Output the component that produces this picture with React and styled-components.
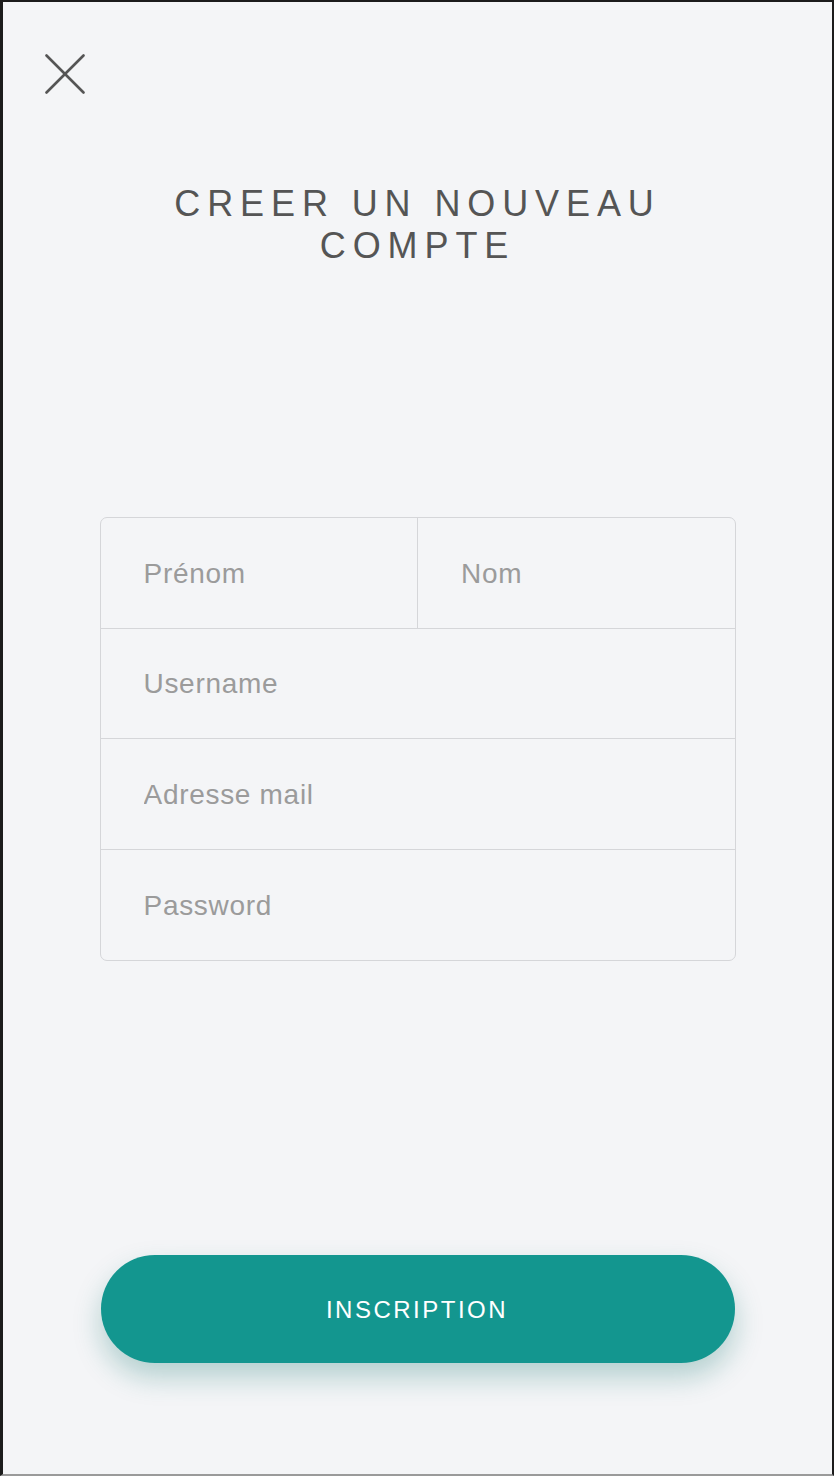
import React from 'react'
import styled, { createGlobalStyle } from 'styled-components'

const GlobalStyle = createGlobalStyle`
    html, body {
        margin: 0;
        padding: 0;
        background: #f4f5f7;
    }
    * {
        box-sizing: border-box;
    }
`

const Screen = styled.div`
    width: 834px;
    height: 1476px;
    background-color: #f4f5f7;
    border-top: 2px solid #1c1c1c;
    border-left: 3px solid #1c1c1c;
    border-right: 2px solid #1c1c1c;
    border-bottom: 2px solid #9a9a9a;
    font-family: "Liberation Sans", Arial, sans-serif;
    display: flex;
    flex-direction: column;
    align-items: center;
`

const TopBar = styled.div`
    width: 100%;
    padding: 52px 0 0 42px;
    display: flex;
`

const CloseButton = styled.button`
    width: 40px;
    height: 40px;
    padding: 0;
    border: none;
    background: transparent;
    cursor: pointer;
    display: flex;
`

const Title = styled.h1`
    margin: 89px 0 0 0;
    max-width: 520px;
    font-size: 36px;
    line-height: 42px;
    font-weight: 400;
    letter-spacing: 6.9px;
    text-align: center;
    color: #555555;
`

const FormCard = styled.form`
    margin-top: 250px;
    width: 636px;
    border: 1px solid #d5d6d9;
    border-radius: 7px;
    display: flex;
    flex-direction: column;
    overflow: hidden;
`

const Row = styled.div`
    display: flex;
    height: 110.5px;
    border-bottom: ${props => props.last ? 'none' : '1px solid #d5d6d9'};
`

const Field = styled.input`
    flex: 1;
    min-width: 0;
    height: 100%;
    border: none;
    border-left: ${props => props.divided ? '1px solid #d5d6d9' : 'none'};
    background: transparent;
    padding: 2px 0 0 43px;
    font-family: "Liberation Sans", Arial, sans-serif;
    font-size: 28px;
    letter-spacing: 0.7px;
    color: #555555;
    outline: none;

    &::placeholder {
        color: #9b9b9b;
    }
`

const Spacer = styled.div`
    flex: 1;
`

const SubmitButton = styled.button`
    margin-bottom: 111px;
    width: 634px;
    height: 108px;
    border: none;
    border-radius: 54px;
    background-color: #13968f;
    box-shadow: 0 14px 28px rgba(12, 110, 104, 0.28);
    color: #ffffff;
    font-family: "Liberation Sans", Arial, sans-serif;
    font-size: 24px;
    letter-spacing: 2.5px;
    padding-left: 5px;
    padding-top: 3px;
    cursor: pointer;
`

const CloseIcon = () => (
    <svg width="40" height="40" viewBox="0 0 40 40">
        <line x1="1.5" y1="1.5" x2="38.5" y2="38.5" stroke="#555555" strokeWidth="2.6" strokeLinecap="round" />
        <line x1="38.5" y1="1.5" x2="1.5" y2="38.5" stroke="#555555" strokeWidth="2.6" strokeLinecap="round" />
    </svg>
)

const App = () => {
    return (
        <>
            <GlobalStyle />
            <Screen>
                <TopBar>
                    <CloseButton aria-label="Fermer">
                        <CloseIcon />
                    </CloseButton>
                </TopBar>

                <Title>CREER UN NOUVEAU COMPTE</Title>

                <FormCard onSubmit={e => e.preventDefault()}>
                    <Row>
                        <Field placeholder="Prénom" name="prenom" />
                        <Field placeholder="Nom" name="nom" divided />
                    </Row>
                    <Row>
                        <Field placeholder="Username" name="username" />
                    </Row>
                    <Row>
                        <Field placeholder="Adresse mail" name="email" type="email" />
                    </Row>
                    <Row last>
                        <Field placeholder="Password" name="password" type="password" />
                    </Row>
                </FormCard>

                <Spacer />

                <SubmitButton>INSCRIPTION</SubmitButton>
            </Screen>
        </>
    )
}

export default App
